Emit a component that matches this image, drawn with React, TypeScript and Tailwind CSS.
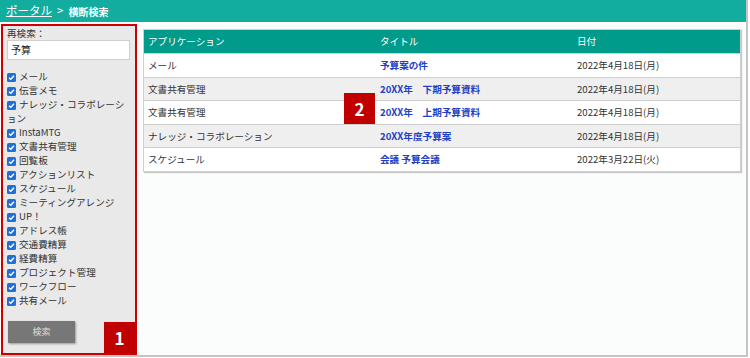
const apps = [
  "メール",
  "伝言メモ",
  "ナレッジ・コラボレーション",
  "InstaMTG",
  "文書共有管理",
  "回覧板",
  "アクションリスト",
  "スケジュール",
  "ミーティングアレンジ",
  "UP！",
  "アドレス帳",
  "交通費精算",
  "経費精算",
  "プロジェクト管理",
  "ワークフロー",
  "共有メール",
];

const rows = [
  { app: "メール", title: "予算案の件", date: "2022年4月18日(月)" },
  { app: "文書共有管理", title: "20XX年　下期予算資料", date: "2022年4月18日(月)" },
  { app: "文書共有管理", title: "20XX年　上期予算資料", date: "2022年4月18日(月)" },
  { app: "ナレッジ・コラボレーション", title: "20XX年度予算案", date: "2022年4月18日(月)" },
  { app: "スケジュール", title: "会議 予算会議", date: "2022年3月22日(火)" },
];

function Check() {
  return (
    <span className="inline-flex w-[9px] h-[9px] mr-[3px] align-[-1px] items-center justify-center rounded-[1.5px] bg-[#1e6fd9]">
      <svg width="7" height="7" viewBox="0 0 10 10">
        <path d="M1.5 5.2 L4 7.6 L8.6 2.4" fill="none" stroke="white" strokeWidth="2" />
      </svg>
    </span>
  );
}

export default function App() {
  return (
    <div
      className="w-[750px] h-[358px] bg-white text-[#333] text-[9.6px]"
      style={{ fontFamily: '"Noto Sans CJK JP", "Noto Sans", sans-serif' }}
    >
      <div className="w-[748px] h-[357px] flex flex-col border-r-2 border-b-2 border-[#c4c4c4]">
        {/* header */}
        <div className="h-[22px] shrink-0 bg-[#12ad9f] flex items-center px-[6px] text-white text-[11.5px]">
          <span className="underline">ポータル</span>
          <span className="ml-[5px]">&gt;</span>
          <span className="ml-[5px] font-bold text-[10px]">横断検索</span>
        </div>

        <div className="flex flex-1 pt-[2px]">
          {/* sidebar */}
          <div className="relative w-[136px] ml-px border-2 border-[#cc0000] bg-[#e9e9e9] px-[4px] pt-0 leading-[14px]">
            <div>再検索：</div>
            <div className="mt-0 w-[123px] h-[20px] bg-white border border-[#cfcfcf] px-[3px] flex items-center text-[10px] text-[#222]">
              予算
            </div>
            <div className="mt-[9px] w-[118px]">
              {apps.map((a) => (
                <div key={a}>
                  <Check />
                  {a}
                </div>
              ))}
            </div>
            <div className="mt-[14px] ml-px w-[67px] h-[22px] bg-[#777] shadow-[1px_1px_2px_rgba(0,0,0,0.35)] flex items-center justify-center text-[#ddd] text-[9px]">
              検索
            </div>
            <div className="absolute right-0 bottom-0 w-[31px] h-[31px] bg-[#c00000] text-white font-bold text-[17px] flex items-center justify-center">
              1
            </div>
          </div>

          {/* main */}
          <div className="relative flex-1 ml-px bg-[#fbfdfc] px-[5px] pt-[5px]">
            <div className="border border-[#cfcfcf] shadow-[1px_1px_1px_#c8c8c8]">
              <div className="grid grid-cols-[231px_197px_1fr] h-[23px] items-center bg-[#009b8b] text-white">
                <div className="pl-[4px]">アプリケーション</div>
                <div className="pl-[5px]">タイトル</div>
                <div className="pl-[5px]">日付</div>
              </div>
              {rows.map((r, i) => (
                <div
                  key={i}
                  className={
                    "grid grid-cols-[231px_197px_1fr] h-[23.5px] items-center border-t border-[#cfcfcf] " +
                    (i % 2 === 1 ? "bg-[#efefef]" : "bg-white")
                  }
                >
                  <div className="pl-[4px]">{r.app}</div>
                  <div className="pl-[5px] font-bold text-[#2340c4] whitespace-pre">{r.title}</div>
                  <div className="pl-[5px]">{r.date}</div>
                </div>
              ))}
            </div>
            <div className="absolute left-[206px] top-[69px] w-[31px] h-[31px] bg-[#c00000] text-white font-bold text-[17px] flex items-center justify-center">
              2
            </div>
          </div>
        </div>
      </div>
    </div>
  );
}
